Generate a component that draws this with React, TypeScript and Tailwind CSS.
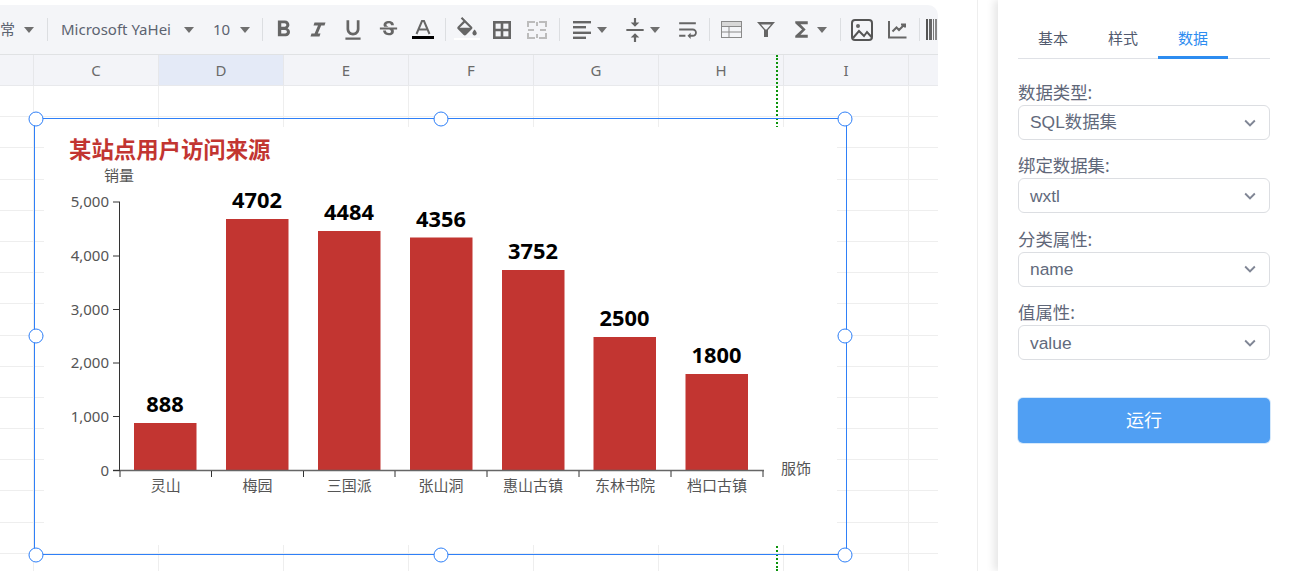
import type { ReactNode } from "react";
import {
  MdFormatBold,
  MdFormatColorFill,
  MdFormatUnderlined,
  MdFunctions,
  MdKeyboardArrowDown,
  MdStrikethroughS,
  MdVerticalAlignCenter,
  MdWrapText,
} from "react-icons/md";

const columns = ["C", "D", "E", "F", "G", "H", "I"];
const rowCount = 16;

const bars = [
  { name: "灵山", value: 888, x: 134, top: 423 },
  { name: "梅园", value: 4702, x: 226, top: 219 },
  { name: "三国派", value: 4484, x: 318, top: 231 },
  { name: "张山洞", value: 4356, x: 410, top: 237.5 },
  { name: "惠山古镇", value: 3752, x: 502, top: 270 },
  { name: "东林书院", value: 2500, x: 593.5, top: 337 },
  { name: "档口古镇", value: 1800, x: 685.5, top: 374 },
];

const yTicks = [
  { label: "5,000", y: 202 },
  { label: "4,000", y: 256 },
  { label: "3,000", y: 309.5 },
  { label: "2,000", y: 363 },
  { label: "1,000", y: 416.5 },
  { label: "0", y: 470.5 },
];

const xTicks = [120, 211.5, 303.5, 395, 487, 579, 671, 763];

const fields = [
  { label: "数据类型:", value: "SQL数据集" },
  { label: "绑定数据集:", value: "wxtl" },
  { label: "分类属性:", value: "name" },
  { label: "值属性:", value: "value" },
];

const handles = [
  "left-[35.5px] top-[118.5px]",
  "left-[440.5px] top-[118.5px]",
  "left-[845px] top-[118.5px]",
  "left-[35.5px] top-[336px]",
  "left-[845px] top-[336px]",
  "left-[35.5px] top-[554.5px]",
  "left-[440.5px] top-[554.5px]",
  "left-[845px] top-[554.5px]",
];

function Caret() {
  return <span className="h-0 w-0 shrink-0 border-x-[5.5px] border-t-[6px] border-x-transparent border-t-[#6f6f6f]" />;
}

function Sep() {
  return <span className="mx-1 h-[23px] w-px shrink-0 bg-[#dcdee1]" />;
}

function Btn({ children }: { children: ReactNode }) {
  return <span className="flex h-full w-[35px] shrink-0 items-center justify-center text-[#666]">{children}</span>;
}

function DropBtn({ children, width }: { children: ReactNode; width: string }) {
  return (
    <span className={`flex h-full shrink-0 items-center text-[#666] ${width}`}>
      <span className="-mr-[3px] flex w-[36px] items-center justify-center">{children}</span>
      <Caret />
    </span>
  );
}

function Toolbar() {
  return (
    <div className="flex h-[50px] items-center overflow-hidden rounded-tr-[10px] border-b border-[#e0e2e4] bg-[#f4f5f8] text-[15px] text-[#5c6370]">
      <span className="w-[24px] shrink-0">常</span>
      <Caret />
      <span className="ml-[13px] h-[23px] w-px shrink-0 bg-[#dcdee1]" />
      <span className="ml-[13px] w-[114px] shrink-0 whitespace-nowrap">Microsoft YaHei</span>
      <span className="ml-[9px] flex">
        <Caret />
      </span>
      <span className="ml-[19px] w-[18px] shrink-0">10</span>
      <span className="ml-[9px] flex">
        <Caret />
      </span>
      <span className="ml-[12px] h-[23px] w-px shrink-0 bg-[#dcdee1]" />
      <span className="w-[2.5px] shrink-0" />
      <Btn><MdFormatBold size={27} /></Btn>
      <Btn>
        <svg width="16" height="15" viewBox="0 0 16 15">
          <path d="M4.5 0.5 H15.5 L14.5 3.5 H11.2 L7.8 11.5 H10.5 L9.5 14.5 H0.5 L1.5 11.5 H4.6 L8 3.5 H3.5 Z" fill="#666" />
        </svg>
      </Btn>
      <Btn><MdFormatUnderlined size={26} /></Btn>
      <Btn><MdStrikethroughS size={23} /></Btn>
      <Btn>
        <svg width="22" height="22" viewBox="0 0 22 22">
          <path d="M4.5 15 L10 2 h2 L17.5 15 M7 10.5 h8" fill="none" stroke="#666" strokeWidth="2" />
          <rect x="0" y="17" width="22" height="3" fill="#000" />
        </svg>
      </Btn>
      <Sep />
      <Btn>
        <span className="relative flex">
          <MdFormatColorFill size={26} />
          <span className="absolute bottom-0 left-0 h-[5px] w-full border-t-2 border-white bg-[#f4f5f8]" />
        </span>
      </Btn>
      <Btn>
        <svg width="18" height="18" viewBox="0 0 18 18" fill="none" stroke="#666" strokeWidth="2.6">
          <rect x="1.3" y="1.3" width="15.4" height="15.4" />
          <path d="M9 1 V17 M1 9 H17" />
        </svg>
      </Btn>
      <Btn>
        <svg width="20" height="18" viewBox="0 0 20 18" fill="none" stroke="#bcbcbc" strokeWidth="2">
          <path d="M1 6 V1 h7 M12 1 h7 v5 M1 12 v5 h7 M12 17 h7 v-5 M1 9 h6 M13 9 h6 M10 1 v4 M10 13 v4" />
        </svg>
      </Btn>
      <Sep />
      <DropBtn width="w-[53px]">
        <svg width="18" height="18" viewBox="0 0 18 18" fill="#666">
          <rect x="0" y="0" width="18" height="2.4" />
          <rect x="0" y="5" width="13" height="2.4" />
          <rect x="0" y="10.6" width="18" height="2.4" />
          <rect x="0" y="15.6" width="13" height="2.4" />
        </svg>
      </DropBtn>
      <DropBtn width="w-[53px]"><MdVerticalAlignCenter size={26} /></DropBtn>
      <Btn><MdWrapText size={25} /></Btn>
      <Sep />
      <Btn>
        <svg width="21" height="17" viewBox="0 0 21 17">
          <rect x="0.5" y="0.5" width="20" height="16" fill="none" stroke="#8a8a8a" />
          <rect x="1" y="1" width="19" height="4" fill="#d8d8d8" />
          <path d="M1 5.5 h19 M1 11 h19 M8 5.5 v11" stroke="#8a8a8a" />
        </svg>
      </Btn>
      <Btn>
        <svg width="20" height="17" viewBox="0 0 20 17">
          <path d="M1 1 h18 l-7 8 v7 h-4 v-7 z M5 3.5 l4.4 5 h1.2 l4.4 -5 z" fill="#666" fillRule="evenodd" />
        </svg>
      </Btn>
      <DropBtn width="w-[52px]"><MdFunctions size={25} /></DropBtn>
      <Sep />
      <Btn>
        <svg width="22" height="22" viewBox="0 0 22 22" fill="none" stroke="#555" strokeWidth="2">
          <rect x="1" y="1" width="20" height="20" rx="3" />
          <circle cx="7" cy="7" r="2" fill="#666" stroke="none" />
          <path d="M2 19 L8 12 L13 17 L16 13 L20.5 18" />
        </svg>
      </Btn>
      <Btn>
        <svg width="19" height="19" viewBox="0 0 19 19" fill="none" stroke="#666" strokeWidth="2">
          <path d="M1 1 V17.5 H18.5" />
          <path d="M4.5 11.5 L8.5 7.5 L11 10 L16 5 M13 4.5 h4 v3" />
        </svg>
      </Btn>
      <Sep />
      <span className="ml-[2px] flex h-[21px] shrink-0 gap-px">
        <span className="w-[2px] bg-[#555]" />
        <span className="w-[3px] bg-[#666]" />
        <span className="w-px bg-[#777]" />
        <span className="w-[2px] bg-[#888]" />
        <span className="w-px bg-[#aaa]" />
      </span>
    </div>
  );
}

function Sheet() {
  return (
    <>
      <div className="grid h-[31px] grid-cols-[34px_repeat(7,125px)_30px] border-b border-[#e8e9ec] bg-[#f3f4f8] text-[15px] text-[#6a6a6a]">
        <div className="border-r border-[#e6e7ea]" />
        {columns.map((c) => (
          <div
            key={c}
            className={`flex items-center justify-center border-r border-[#e6e7ea] ${c === "D" ? "bg-[#e4eaf7]" : ""}`}
          >
            {c}
          </div>
        ))}
        <div />
      </div>
      {Array.from({ length: rowCount }, (_, r) => (
        <div key={r} className="grid h-[31.2px] grid-cols-[34px_repeat(7,125px)_30px] border-b border-[#eeeeee]">
          <div className="border-r border-[#eeeeee]" />
          {columns.map((c) => (
            <div key={c} className="border-r border-[#eeeeee]" />
          ))}
          <div />
        </div>
      ))}
    </>
  );
}

function Chart() {
  return (
    <svg
      className="absolute left-[44px] top-[127px] bg-white"
      width="793"
      height="418"
      viewBox="44 127 793 418"
    >
      <text x="69" y="158" className="fill-[#c23531] text-[22.4px] font-bold">某站点用户访问来源</text>
      <text x="119" y="181" textAnchor="middle" className="fill-[#555] text-[15px]">销量</text>
      <text x="781" y="474" className="fill-[#555] text-[15px]">服饰</text>

      {bars.map((b, i) => (
        <g key={b.name}>
          <rect x={b.x} y={b.top} width="62.5" height={471 - b.top} fill="#c23531" />
          <text x={b.x + 31} y={b.top - 11} textAnchor="middle" className="fill-black text-[21.8px] font-bold">
            {b.value}
          </text>
          <text x={(xTicks[i] + xTicks[i + 1]) / 2} y="491" textAnchor="middle" className="fill-[#555] text-[15px]">
            {b.name}
          </text>
        </g>
      ))}

      <path d="M119.5 202 V471" stroke="#333" strokeWidth="1" />
      <path d="M113 470.5 H764" stroke="#666" strokeWidth="1.3" />
      {yTicks.map((t) => (
        <g key={t.label}>
          <path d={`M113 ${t.y} H120`} stroke="#333" strokeWidth="1" />
          <text x="109" y={t.y + 5} textAnchor="end" className="fill-[#555] text-[15px]">{t.label}</text>
        </g>
      ))}
      {xTicks.map((x) => (
        <path key={x} d={`M${x} 471 V477`} stroke="#333" strokeWidth="1" />
      ))}
    </svg>
  );
}

function Selection() {
  return (
    <>
      <div className="absolute left-[34px] top-[118px] h-[437px] w-[813px] border border-[#2f80f8]" />
      {handles.map((pos) => (
        <span
          key={pos}
          className={`absolute h-[15px] w-[15px] -translate-x-1/2 -translate-y-1/2 rounded-full border border-[#2f80f8] bg-white ${pos}`}
        />
      ))}
    </>
  );
}

function SidePanel() {
  return (
    <aside className="h-[571px] w-[292px] shrink-0 bg-white px-5 pt-[20px] shadow-[-4px_0_8px_rgba(0,0,0,0.1)]">
      <div className="flex h-[39px] border-b border-[#dfe1e6] pr-[42px] text-[15px] text-[#515a6e]">
        <span className="flex h-[39px] w-[70px] items-center justify-center pb-[2px]">基本</span>
        <span className="flex h-[39px] w-[70px] items-center justify-center pb-[2px]">样式</span>
        <span className="flex h-[39px] w-[70px] items-center justify-center border-b-[3px] border-[#2d8cf0] pt-[1px] text-[#2d8cf0]">
          数据
        </span>
      </div>
      <div className="mt-[21px] flex flex-col gap-[3px]">
        {fields.map((f) => (
          <div key={f.label} className="h-[70.4px]">
            <div className="h-[25px] text-[17.4px] leading-[25px] text-[#5f6779]">{f.label}</div>
            <div className="flex h-[35px] items-center justify-between rounded-[6px] border border-[#dcdee2] pl-[11px] pr-[8px] font-[family-name:'Liberation_Sans','Noto_Sans_CJK_SC',sans-serif] text-[17.4px] text-[#626a7c]">
              <span>{f.value}</span>
              <MdKeyboardArrowDown size={22} className="text-[#808695]" />
            </div>
          </div>
        ))}
      </div>
      <button className="mt-[27px] flex h-[45px] w-full items-center justify-center rounded-[5px] bg-[#509ff3] text-[18px] text-white shadow-[0_0_0_1px_#d6e9fb]">
        运行
      </button>
    </aside>
  );
}

export default function App() {
  return (
    <div className="flex h-[571px] w-[1290px] overflow-hidden bg-white font-[family-name:'Noto_Sans','Noto_Sans_CJK_SC',sans-serif]">
      <div className="relative h-[571px] w-[938px] shrink-0 overflow-hidden pt-[5px]">
        <Toolbar />
        <Sheet />
        <div className="absolute left-[776px] top-[55px] h-[516px] border-l-2 border-dotted border-[#0b930b]" />
        <Chart />
        <Selection />
      </div>
      <div className="h-full w-[40px] shrink-0 border-r border-[#eeeeee]" />
      <div className="w-[20px] shrink-0" />
      <SidePanel />
    </div>
  );
}
